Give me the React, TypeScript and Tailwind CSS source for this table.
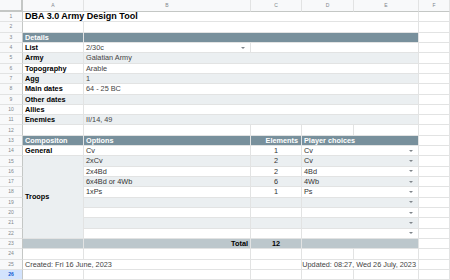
import React from "react";

type P = { className?: string; children?: React.ReactNode };

function Cell({ className = "", children }: P) {
  return (
    <div
      className={`flex min-w-0 items-center whitespace-nowrap border-r border-b border-[#e2e3e3] px-[2px] text-[7.3px] leading-none text-[#333] ${className}`}
    >
      {children}
    </div>
  );
}

function RowNum({ n, active = false }: { n: number; active?: boolean }) {
  return (
    <div
      className={`flex items-center justify-center border-r border-b border-r-[#c4c7c5] border-b-[#e2e3e3] text-[5px] leading-none ${
        active ? "bg-[#d3e3fd] font-bold text-[#0b57d0]" : "bg-[#f8f9fa] text-[#80868b]"
      }`}
    >
      {n}
    </div>
  );
}

function Arrow() {
  return (
    <svg className="ml-auto mr-[3px] shrink-0" width="4" height="2" viewBox="0 0 4 2">
      <path d="M0 0h4L2 2z" fill="#80868b" />
    </svg>
  );
}

const details = [
  { n: 5, label: "Army", value: "Galatian Army", alt: true },
  { n: 6, label: "Topography", value: "Arable", alt: false },
  { n: 7, label: "Agg", value: "1", alt: true },
  { n: 8, label: "Main dates", value: "64 - 25 BC", alt: false },
  { n: 9, label: "Other dates", value: "", alt: true },
  { n: 10, label: "Allies", value: "", alt: false },
  { n: 11, label: "Enemies", value: "II/14, 49", alt: true },
];

const troops = [
  { n: 15, opt: "2xCv", el: "2", pick: "Cv", alt: true },
  { n: 16, opt: "2x4Bd", el: "2", pick: "4Bd", alt: false },
  { n: 17, opt: "6x4Bd or 4Wb", el: "6", pick: "4Wb", alt: true },
  { n: 18, opt: "1xPs", el: "1", pick: "Ps", alt: false },
  { n: 19, opt: "", el: "", pick: "", alt: true },
  { n: 20, opt: "", el: "", pick: "", alt: false },
  { n: 21, opt: "", el: "", pick: "", alt: true },
  { n: 22, opt: "", el: "", pick: "", alt: false },
];

export default function App() {
  return (
    <div className="grid h-[280px] w-[450px] grid-cols-[23px_61px_167px_51px_52px_65px_31px] grid-rows-[12px_repeat(26,10.32px)] overflow-hidden bg-white font-['Liberation_Sans',Arial,sans-serif]">
      {/* column headers */}
      <div className="border-r-2 border-b-2 border-[#c4c7c5] bg-[#f8f9fa]" />
      {["A", "B", "C", "D", "E", "F"].map((c) => (
        <div
          key={c}
          className="flex items-center justify-center border-r border-b border-r-[#e2e3e3] border-b-[#c4c7c5] bg-[#f8f9fa] text-[5px] leading-none text-[#80868b]"
        >
          {c}
        </div>
      ))}

      {/* 1 */}
      <RowNum n={1} />
      <Cell className="col-span-5 text-[9px] font-bold text-black">DBA 3.0 Army Design Tool</Cell>
      <Cell />

      {/* 2 */}
      <RowNum n={2} />
      <Cell />
      <Cell className="col-span-4" />
      <Cell />

      {/* 3 */}
      <RowNum n={3} />
      <Cell className="bg-[#78909c] font-bold text-white">Details</Cell>
      <Cell className="col-span-4 bg-[#78909c]" />
      <Cell />

      {/* 4 */}
      <RowNum n={4} />
      <Cell className="font-bold text-black">List</Cell>
      <Cell className="text-[#444]">
        2/30c
        <Arrow />
      </Cell>
      <Cell className="col-span-3" />
      <Cell />

      {details.map((d) => (
        <React.Fragment key={d.n}>
          <RowNum n={d.n} />
          <Cell className={`font-bold text-black ${d.alt ? "bg-[#ebeff1]" : ""}`}>{d.label}</Cell>
          <Cell className={`col-span-4 text-[#444] ${d.alt ? "bg-[#ebeff1]" : ""}`}>{d.value}</Cell>
          <Cell />
        </React.Fragment>
      ))}

      {/* 12 */}
      <RowNum n={12} />
      <Cell />
      <Cell />
      <Cell />
      <Cell />
      <Cell />
      <Cell />

      {/* 13 */}
      <RowNum n={13} />
      <Cell className="bg-[#78909c] font-bold text-white">Compositon</Cell>
      <Cell className="bg-[#78909c] font-bold text-white">Options</Cell>
      <Cell className="justify-end bg-[#78909c] pr-[3px] font-bold text-white">Elements</Cell>
      <Cell className="col-span-2 bg-[#78909c] font-bold text-white">Player choices</Cell>
      <Cell />

      {/* 14 */}
      <RowNum n={14} />
      <Cell className="font-bold text-black">General</Cell>
      <Cell>Cv</Cell>
      <Cell className="justify-center">1</Cell>
      <Cell className="col-span-2 text-[#222]">
        Cv
        <Arrow />
      </Cell>
      <Cell />

      {troops.map((t, i) => (
        <React.Fragment key={t.n}>
          <RowNum n={t.n} />
          {i === 0 && (
            <Cell className="row-span-8 bg-[#ebeff1] font-bold text-black">Troops</Cell>
          )}
          <Cell className={t.alt ? "bg-[#ebeff1]" : ""}>{t.opt}</Cell>
          <Cell className={`justify-center ${t.alt ? "bg-[#ebeff1]" : ""}`}>{t.el}</Cell>
          <Cell className={`col-span-2 text-[#222] ${t.alt ? "bg-[#ebeff1]" : ""}`}>
            {t.pick}
            <Arrow />
          </Cell>
          <Cell />
        </React.Fragment>
      ))}

      {/* 23 */}
      <RowNum n={23} />
      <Cell className="bg-[#bcc7cc]" />
      <Cell className="justify-end bg-[#bcc7cc] font-bold text-black">Total</Cell>
      <Cell className="justify-center bg-[#bcc7cc] font-bold text-black">12</Cell>
      <Cell className="col-span-2 bg-[#bcc7cc]" />
      <Cell />

      {/* 24 */}
      <RowNum n={24} />
      <Cell />
      <Cell />
      <Cell />
      <Cell />
      <Cell />
      <Cell />

      {/* 25 */}
      <RowNum n={25} />
      <Cell className="col-span-2 text-[#444]">Created: Fri 16 June, 2023</Cell>
      <Cell />
      <Cell className="col-span-2 justify-end text-[#444]">Updated: 08:27, Wed 26 July, 2023</Cell>
      <Cell />

      {/* 26 */}
      <RowNum n={26} active />
      <Cell />
      <Cell />
      <Cell />
      <Cell />
      <Cell />
      <Cell />
    </div>
  );
}
